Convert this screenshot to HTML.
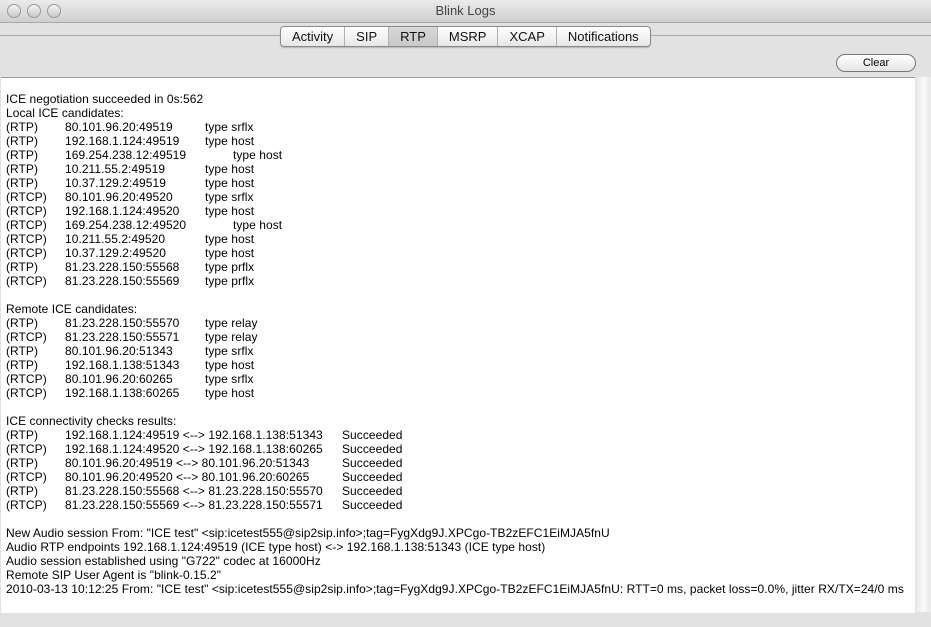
<!DOCTYPE html>
<html><head><style>
body{margin:0;width:931px;height:627px;background:#e2e2e2;font-family:"Liberation Sans",sans-serif;position:relative;overflow:hidden}
#title{position:absolute;left:0;top:0;width:931px;height:22px;background:linear-gradient(#ebebeb,#cfcfcf);border-bottom:1px solid #a8a8a8;text-align:center;font-size:13px;line-height:22px;color:#444}
.tl{position:absolute;top:4px;width:12px;height:12px;border-radius:50%;background:linear-gradient(#f4f4f4,#c8c8c8);border:1px solid #999}
#line{position:absolute;left:0;top:35px;width:931px;height:1px;background:#aaa}
#tabs{position:absolute;left:280px;top:26px;height:19px;border:1px solid #8a8a8a;border-radius:4px;background:linear-gradient(#fff,#e6e6e6);display:flex;font-size:13px;line-height:19px;box-shadow:0 1px 1px rgba(0,0,0,.2)}
#tabs span{padding:0 11px;border-right:1px solid #b0b0b0;color:#111}
#tabs span:last-child{border-right:none}
#tabs span.sel{background:linear-gradient(#d8d8d8,#c8c8c8)}
#clear{position:absolute;left:836px;top:54px;width:78px;height:16px;border:1px solid #777;border-radius:9px;background:linear-gradient(#fff,#e6e6e6);font-size:11px;text-align:center;line-height:16px}
#log{position:absolute;left:1px;top:77px;width:914px;height:535px;background:#fff;border-top:1px solid #9a9a9a}
#sb{position:absolute;left:916px;top:77px;width:15px;height:535px;background:linear-gradient(90deg,#e8e8e8,#fafafa,#e8e8e8)}
pre{margin:0;position:absolute;left:5px;top:14px;font-family:"Liberation Sans",sans-serif;font-size:12px;line-height:14px;color:#000;white-space:pre;letter-spacing:0.05px}
.a{display:inline-block;width:59px}.b{display:inline-block;width:140px}.c{display:inline-block;width:277px}.d{padding-left:28px}
</style></head><body>
<div id="title">Blink Logs</div>
<div class="tl" style="left:7px"></div><div class="tl" style="left:27px"></div><div class="tl" style="left:47px"></div>
<div id="line"></div>
<div id="tabs"><span>Activity</span><span>SIP</span><span class="sel">RTP</span><span>MSRP</span><span>XCAP</span><span>Notifications</span></div>
<div id="clear">Clear</div>
<div id="log"><pre>ICE negotiation succeeded in 0s:562
Local ICE candidates:
<span class="a">(RTP)</span><span class="b">80.101.96.20:49519</span>type srflx
<span class="a">(RTP)</span><span class="b">192.168.1.124:49519</span>type host
<span class="a">(RTP)</span><span class="b">169.254.238.12:49519</span><span class="d">type host</span>
<span class="a">(RTP)</span><span class="b">10.211.55.2:49519</span>type host
<span class="a">(RTP)</span><span class="b">10.37.129.2:49519</span>type host
<span class="a">(RTCP)</span><span class="b">80.101.96.20:49520</span>type srflx
<span class="a">(RTCP)</span><span class="b">192.168.1.124:49520</span>type host
<span class="a">(RTCP)</span><span class="b">169.254.238.12:49520</span><span class="d">type host</span>
<span class="a">(RTCP)</span><span class="b">10.211.55.2:49520</span>type host
<span class="a">(RTCP)</span><span class="b">10.37.129.2:49520</span>type host
<span class="a">(RTP)</span><span class="b">81.23.228.150:55568</span>type prflx
<span class="a">(RTCP)</span><span class="b">81.23.228.150:55569</span>type prflx

Remote ICE candidates:
<span class="a">(RTP)</span><span class="b">81.23.228.150:55570</span>type relay
<span class="a">(RTCP)</span><span class="b">81.23.228.150:55571</span>type relay
<span class="a">(RTP)</span><span class="b">80.101.96.20:51343</span>type srflx
<span class="a">(RTP)</span><span class="b">192.168.1.138:51343</span>type host
<span class="a">(RTCP)</span><span class="b">80.101.96.20:60265</span>type srflx
<span class="a">(RTCP)</span><span class="b">192.168.1.138:60265</span>type host

ICE connectivity checks results:
<span class="a">(RTP)</span><span class="c">192.168.1.124:49519 &lt;--&gt; 192.168.1.138:51343</span>Succeeded
<span class="a">(RTCP)</span><span class="c">192.168.1.124:49520 &lt;--&gt; 192.168.1.138:60265</span>Succeeded
<span class="a">(RTP)</span><span class="c">80.101.96.20:49519 &lt;--&gt; 80.101.96.20:51343</span>Succeeded
<span class="a">(RTCP)</span><span class="c">80.101.96.20:49520 &lt;--&gt; 80.101.96.20:60265</span>Succeeded
<span class="a">(RTP)</span><span class="c">81.23.228.150:55568 &lt;--&gt; 81.23.228.150:55570</span>Succeeded
<span class="a">(RTCP)</span><span class="c">81.23.228.150:55569 &lt;--&gt; 81.23.228.150:55571</span>Succeeded

New Audio session From: "ICE test" &lt;sip:icetest555@sip2sip.info&gt;;tag=FygXdg9J.XPCgo-TB2zEFC1EiMJA5fnU
Audio RTP endpoints 192.168.1.124:49519 (ICE type host) &lt;-&gt; 192.168.1.138:51343 (ICE type host)
Audio session established using "G722" codec at 16000Hz
Remote SIP User Agent is "blink-0.15.2"
2010-03-13 10:12:25 From: "ICE test" &lt;sip:icetest555@sip2sip.info&gt;;tag=FygXdg9J.XPCgo-TB2zEFC1EiMJA5fnU: RTT=0 ms, packet loss=0.0%, jitter RX/TX=24/0 ms</pre></div>
<div id="sb"></div>
</body></html>
